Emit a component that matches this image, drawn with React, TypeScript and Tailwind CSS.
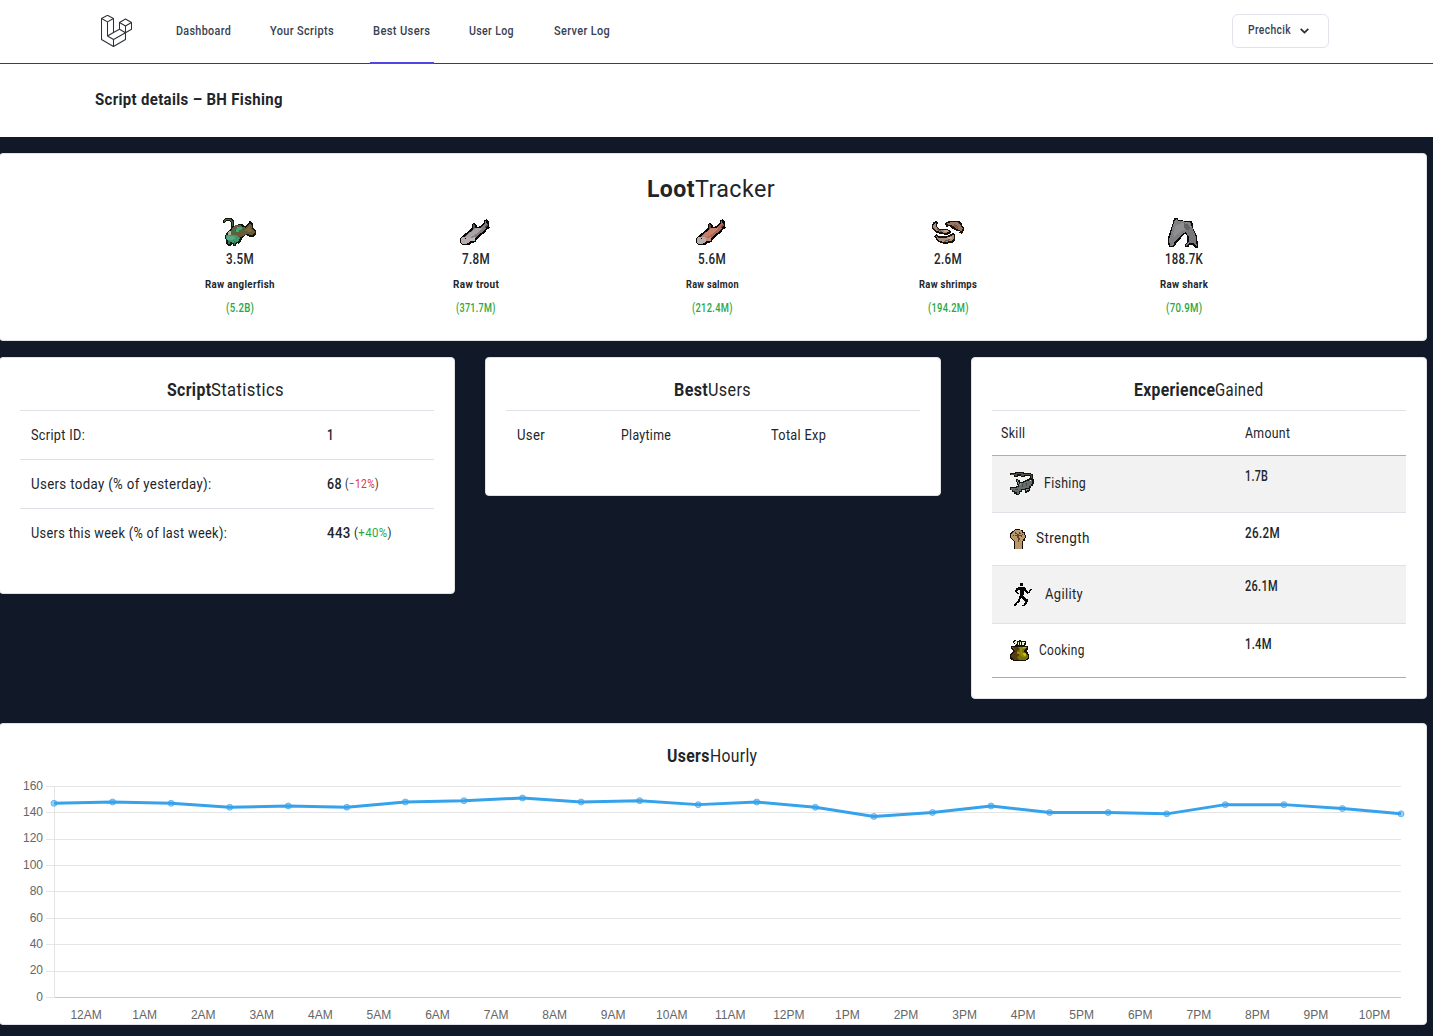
import { useLayoutEffect, useRef, useState } from "react";
import type { ReactNode } from "react";

/* Condensed text: the glyphs are scaled horizontally to fill a given width. */
function Fit({ w, className = "", children }: { w: number; className?: string; children: ReactNode }) {
  const ref = useRef<HTMLSpanElement>(null);
  const [scale, setScale] = useState(1);
  useLayoutEffect(() => {
    if (ref.current) setScale(w / ref.current.offsetWidth);
  }, [w]);
  return (
    <span className={"inline-block shrink-0 whitespace-nowrap " + className} style={{ width: w }}>
      <span ref={ref} className="inline-block origin-left tracking-[0.4px]" style={{ transform: `scaleX(${scale})` }}>
        {children}
      </span>
    </span>
  );
}

function Logo() {
  return (
    <svg width="32" height="33" viewBox="0.5 0.5 32 33" fill="none" stroke="#2d3038" strokeWidth="1.05" strokeLinejoin="round">
      <path d="M1 4 L7 .8 L13 4 L13 18 L19 14.7 L19 8 L25 4.5 L31 8 L31 14.7 L25 18.2 L25 25 L13 32 L1 25 Z" />
      <path d="M1 4 L7 7.4 L13 4 M7 7.4 V21.5 L13 25 V32 M7 21.5 L13 18 M13 25 L25 18.2 M19 8 L25 11.5 L31 8 M25 11.5 V18.2 L19 14.7" />
    </svg>
  );
}

function Anglerfish() {
  return (
    <svg width="35" height="32" viewBox="96 21 105 96" shapeRendering="crispEdges">
      <path d="M99 42V33L105 27H123L132 36V54L147 45H156L165 51L177 39L180 34L189 45L190 57L198 66V75L189 84H180L168 78L159 84L153 96L147 105L141 102L138 111H129V105L120 111H114L108 102V93L105 84L108 72L114 66L123 57V42L117 36H108L105 42Z" fill="#15150c" />
      <path d="M102 39V33L108 30H120L129 39V52H126V39L117 33H108Z" fill="#3a674b" />
      <path d="M126 60L135 48H150L159 54L168 57L180 42L186 51V60L195 69L186 80L171 75L159 81L144 90L132 81L120 75Z" fill="#665d36" />
      <path d="M123 63L135 54H150V63L138 69L126 75Z" fill="#4a6b48" />
      <path d="M141 54H156V60L147 63V69H138Z" fill="#35aa7e" />
      <path d="M108 78L123 78L138 78L150 87L144 99L129 102L114 96L108 87Z" fill="#3f9672" />
      <path d="M111 81L129 81L138 87L126 93H111Z" fill="#57ab87" />
      <path d="M117 66H123V78H114V69Z" fill="#b1b6a1" />
      <path d="M147 48H153V54H147ZM153 60H159V66H153ZM114 96H120V105H114ZM132 96H135V108H132Z" fill="#2b7952" />
      <path d="M168 60L180 48V60L189 66L180 69L165 66Z" fill="#7a6d3d" />
    </svg>
  );
}

function Fish({ tint }: { tint: "gray" | "red" }) {
  const c = tint === "gray" ? ["#817b7e", "#a8a3a6", "#bbb8ba", "#565153"] : ["#ab6858", "#c4816c", "#c88977", "#754239"];
  return (
    <svg width="32" height="29" viewBox="87 24 96 87" shapeRendering="crispEdges">
      <path d="M90 99V87L96 78L108 69L120 60L126 51V42L132 39L141 48V51L150 48L162 39V30L171 27L174 33H177V51L180 54L171 57L168 63L159 72L147 81L138 90V96L123 99L117 105H96Z" fill="#080707" />
      <path d="M99 84L111 72L126 63L132 54L150 54L165 42V33H168L171 42L168 54L153 69L135 84L120 93L108 90Z" fill={c[0]} />
      <path d="M105 81L123 66L138 54L153 54L156 57L138 72L120 84Z" fill={c[1]} />
      <path d="M96 81H114L120 84V96L108 102H96L93 96V87Z" fill="#b7adae" />
      <path d="M120 84L135 81V93H120Z" fill={c[2]} />
      <path d="M129 42L135 48V54L129 57ZM165 48L174 39V48L165 54Z" fill={c[3]} />
      <path d="M105 84H108V87H105Z" fill="#080707" />
    </svg>
  );
}

function Shrimps() {
  return (
    <svg width="33" height="26" viewBox="90 33 99 78" shapeRendering="crispEdges">
      <g fill="#17110d">
        <path d="M93 48L96 45V42L108 39L111 45L108 48V57L117 63H138L150 69V75L138 81L117 78L102 72L93 60Z" />
        <path d="M132 45L144 39H162L174 39L183 48V54L189 57V66L183 78L174 75L177 69L168 69L156 63L144 54L135 57Z" />
        <path d="M99 84L105 78L114 84L135 84L144 81L156 75L162 81V96L153 105L129 108L111 102Z" />
      </g>
      <path d="M96 51L105 42V57L114 66L141 69L144 72L132 75L117 72L102 66L96 57Z" fill="#a58c79" />
      <path d="M135 48L150 42H168L180 51V57L186 60L180 72L177 66L165 63L159 54L144 51Z" fill="#96745f" />
      <path d="M105 84L114 90H135L150 84L156 78L159 84V93L150 99L129 102L114 99Z" fill="#a8917d" />
      <path d="M108 60L123 69V72L111 69ZM159 48L171 54V63L162 57ZM123 99L138 96L147 90V96L132 102Z" fill="#75594a" />
      <path d="M129 66H141V72H129ZM141 87H153V93H141Z" fill="#c3ab94" />
    </svg>
  );
}

function Shark() {
  return (
    <svg width="32" height="31" viewBox="801 21 96 93" shapeRendering="crispEdges">
      <path d="M819 36L822 24H834V30L864 33L876 33L879 42V51L882 60L891 78V90L894 96V114H885L876 105H867V112H855V102L861 96V78L855 72L849 75L843 84L837 90L828 102L822 112H810L804 102V84L810 66Z" fill="#0d0d0d" />
      <path d="M822 36L828 27L834 33L870 36L876 51L873 60L858 66L846 72L837 84L825 93L819 108H810L807 90L813 69Z" fill="#807f82" />
      <path d="M867 54L876 51L888 81V93L891 108L879 99L867 99L858 108V102L867 93V81L858 66Z" fill="#77767a" />
      <path d="M828 45L849 39L864 45V57L846 60L834 72L822 81L819 69Z" fill="#8f8d90" />
      <path d="M852 39L867 45L870 57L861 60L852 54Z" fill="#636266" />
    </svg>
  );
}

function FishingIcon() {
  return (
    <svg width="25" height="24" viewBox="120 369 75 72" shapeRendering="crispEdges">
      <path d="M120 372H135V369H162V372H183V375H189V390H180V381H165V384H153V381H144V384H132V378H120Z" fill="#151310" />
      <path d="M123 375H138V372H159V375H183V387H186V378H162V381H153V375H141V381H135V378H123Z" fill="#5a5042" />
      <path d="M138 390H144V393H150V399H159V396H165V393H171V390H177V387H189V390H192V405H189V411H183V417H180V426H177V429H171V432H165V423H156V429H150V435H147V438H138V435H132V429H126V423H120V414H138V411H144V408H141V399H138Z" fill="#111514" />
      <path d="M168 396H177V393H186V405H183V411H177V417H165V420H153V426H147V435H141V429H135V426H129V423H123V417H141V414H147V408H153V402H162V399H168Z" fill="#666d6c" />
      <path d="M141 393H144V399H147V405H144V399H141ZM150 402H153V408H147V405H150ZM171 420H177V423H171V426H168V420Z" fill="#8a9292" />
      <path d="M180 393H183V396H180Z" fill="#e4ecec" />
      <path d="M156 405H159V414H156ZM168 402H171V411H168ZM135 420H144V423H135Z" fill="#424846" />
    </svg>
  );
}

function StrengthIcon() {
  return (
    <svg width="16" height="20" viewBox="60 57 48 60" shapeRendering="crispEdges">
      <path d="M75 57H90V60H99V66H105V75H108V84H105V93H99V117H72V93L66 90L60 81V69L66 66V63L75 60Z" fill="#130e09" />
      <path d="M75 60H87L96 63V69L102 69V75H105V84H102L99 93H96V117H75V93H72V90L66 87L63 81V72L69 66Z" fill="#b9986b" />
      <path d="M75 66H78V69H81V72H87V66H90V69H93V72H87V75H93V78H87V84H90V90H87V96H84V84H81V78H75V75H81V72H75ZM96 72H99V75H96V81H93V75H96ZM69 75H72V78H69Z" fill="#5d452c" />
    </svg>
  );
}

function AgilityIcon() {
  return (
    <svg width="18" height="23" viewBox="72 219 54 69" shapeRendering="crispEdges">
      <path d="M90 219H99V228H90ZM84 231H105V234H108V240H111V243H114V246H117V240H120V237H126V240H123V243H120V249H114V252H111V249H108V246H105V243H102V255H99V258H102V261H105V264H108V267H114V276H111V282H108V285H105V288H96V285H102V279H105V273H102V270H99V267H96V264H93V267H90V276H87V279H81V285H78V288H72V282H75V279H78V276H81V273H84V267H87V258H90V240H84V243H81V246H84V249H87V252H81V249H78V246H75V240H78V234H84Z" fill="#050505" />
    </svg>
  );
}

function CookingIcon() {
  return (
    <svg width="19" height="21" viewBox="60 390 57 63" shapeRendering="crispEdges">
      <path d="M72 390H78V393H87V390H93V393H108V402L105 408H114V417L108 423L114 429L117 435V444L111 450L102 453H72L63 450L60 441V432L69 426V420L63 417V408H75V402H72V399H69V393H72Z" fill="#191407" />
      <path d="M75 393H81V402H78V405H75V399H72V396H75ZM84 396H87V405H84ZM90 396H93V405H90ZM96 396H105V399H102V405H96Z" fill="#e9f7d9" />
      <path d="M66 411H111V414L102 420V426L114 435V441L105 450H75L63 441V435L75 426V420L66 414Z" fill="#78700b" />
      <path d="M66 411H81L87 417L81 426L87 435L81 441L87 450H75L63 441V435L75 426V420Z" fill="#573c12" />
      <path d="M87 411H108V414L99 417L96 426L105 432L108 435V441H96L90 432H81V426H90V417Z" fill="#928a09" />
      <path d="M99 411H108V414H99ZM99 429H108V438H102Z" fill="#c2bb10" />
    </svg>
  );
}

const nav = [
  { label: "Dashboard", w: 55, gap: "ml-[43px]" },
  { label: "Your Scripts", w: 64, gap: "ml-[39px]" },
  { label: "Best Users", w: 57, gap: "ml-[39px]", active: true },
  { label: "User Log", w: 45, gap: "ml-[39px]" },
  { label: "Server Log", w: 56, gap: "ml-[40px]" },
];

const loot = [
  { icon: <Anglerfish />, amount: "3.5M", aw: 28, name: "Raw anglerfish", nw: 70, value: "(5.2B)", vw: 28 },
  { icon: <Fish tint="gray" />, amount: "7.8M", aw: 28, name: "Raw trout", nw: 46, value: "(371.7M)", vw: 40 },
  { icon: <Fish tint="red" />, amount: "5.6M", aw: 28, name: "Raw salmon", nw: 53, value: "(212.4M)", vw: 41 },
  { icon: <Shrimps />, amount: "2.6M", aw: 28, name: "Raw shrimps", nw: 58, value: "(194.2M)", vw: 41 },
  { icon: <Shark />, amount: "188.7K", aw: 38, name: "Raw shark", nw: 48, value: "(70.9M)", vw: 36 },
];

const skills = [
  { icon: <FishingIcon />, name: "Fishing", w: 42, amount: "1.7B", aw: 23, row: "h-[57px] bg-[#f2f2f2]", pad: "pl-[18px]", gap: "ml-[9px]" },
  { icon: <StrengthIcon />, name: "Strength", w: 54, amount: "26.2M", aw: 35, row: "h-[53px]", pad: "pl-[18px]", gap: "ml-[10px]" },
  { icon: <AgilityIcon />, name: "Agility", w: 38, amount: "26.1M", aw: 33, row: "h-[58px] bg-[#f2f2f2]", pad: "pl-[22px]", gap: "ml-[13px]" },
  { icon: <CookingIcon />, name: "Cooking", w: 46, amount: "1.4M", aw: 27, row: "h-[53px]", pad: "pl-[18px]", gap: "ml-[10px]" },
];

const hourly = [147, 148, 147, 144, 145, 144, 148, 149, 151, 148, 149, 146, 148, 144, 137, 140, 145, 140, 140, 139, 146, 146, 143, 139];
const hours = ["12AM", "1AM", "2AM", "3AM", "4AM", "5AM", "6AM", "7AM", "8AM", "9AM", "10AM", "11AM", "12PM", "1PM", "2PM", "3PM", "4PM", "5PM", "6PM", "7PM", "8PM", "9PM", "10PM"];
const gridY = [786, 812, 839, 865, 891, 918, 944, 971, 997];

function Title({ bold, rest, bw, rw, className = "" }: { bold: string; rest: string; bw: number; rw: number; className?: string }) {
  return (
    <h2 className={"flex justify-center " + className}>
      <Fit w={bw} className="font-bold">{bold}</Fit>
      <Fit w={rw}>{rest}</Fit>
    </h2>
  );
}

const card = "rounded-[4px] border border-[#dfe1e4] bg-white";

function Chart() {
  const x = (i: number) => 54 + i * 58.565;
  const y = (v: number) => 997.2 - v * 1.319;
  return (
    <svg width="1426" height="254" viewBox="0 770 1426 254" className="block">
      <g shapeRendering="crispEdges">
        {gridY.map((gy, i) => (
          <g key={gy}>
            <rect x="46" y={gy} width="8" height="1" fill="#e5e5e5" />
            <rect x="54" y={gy} width="1347" height="1" fill={i === 8 ? "#c9c9c9" : "#e5e5e5"} />
          </g>
        ))}
        <rect x="54" y="786" width="1" height="212" fill="#e5e5e5" />
      </g>
      <g fill="#666" fontSize="12" fontFamily="Liberation Sans, Arial, sans-serif">
        {gridY.map((gy, i) => (
          <text key={gy} x="43" y={gy + (i === 2 || i === 7 ? 3 : 4)} textAnchor="end">{160 - i * 20}</text>
        ))}
        {hours.map((h, i) => (
          <text key={h} x={86.1 + i * 58.565} y="1019" textAnchor="middle">{h}</text>
        ))}
      </g>
      <polyline points={hourly.map((v, i) => `${x(i)},${y(v)}`).join(" ")} fill="none" stroke="#36a2eb" strokeWidth="3" strokeLinejoin="round" />
      {hourly.map((v, i) => (
        <circle key={i} cx={x(i)} cy={y(v)} r="3" fill="#36a2eb" fillOpacity="0.5" stroke="#36a2eb" strokeOpacity="0.65" />
      ))}
    </svg>
  );
}

export default function App() {
  return (
    <div className="h-[1036px] w-[1433px] overflow-hidden bg-[#111827] font-[Roboto,sans-serif] text-[15px] leading-[20px] text-[#212529]">
      <nav className="flex h-[64px] border-b border-[#374151] bg-white text-[12.5px] font-medium text-[#374151]">
        <div className="mt-[15px] ml-[101px] w-[32px]"><Logo /></div>
        {nav.map((n) => (
          <div key={n.label} className={"relative h-[64px] pt-[21px] " + n.gap}>
            <Fit w={n.w}>{n.label}</Fit>
            {n.active && <div className="absolute bottom-0 -left-[3px] h-[2px] w-[64px] bg-[#4f46e5]" />}
          </div>
        ))}
        <button className="mt-[14px] mr-[104px] ml-auto flex h-[34px] w-[97px] items-center rounded-[6px] border border-[#e2e3ea] pb-[2px] pl-[15px]">
          <Fit w={43}>Prechcik</Fit>
          <svg className="mt-[2px] ml-[9px]" width="9" height="6" viewBox="0 0 9 6" fill="none" stroke="#272d37" strokeWidth="1.7">
            <path d="M.7 .8 4.5 4.6 8.3 .8" />
          </svg>
        </button>
      </nav>
      <header className="h-[73px] bg-white pt-[25px] pl-[95px] text-[17px] font-bold">
        <Fit w={188}>Script details – BH Fishing</Fit>
      </header>

      <main className="-ml-px w-[1428px]">
        <section className={card + " mt-[16px] h-[188px] pt-[25px]"}>
          <Title bold="Loot" rest="Tracker" bw={48} rw={80} className="mr-[4px] text-[24.5px]" />
          <div className="mt-[16px] ml-[122px] flex">
            {loot.map((l) => (
              <div key={l.name} className="flex w-[236px] flex-col items-center">
                <div className="mr-[2px] flex h-[34px] items-center">{l.icon}</div>
                <Fit w={l.aw} className="font-medium">{l.amount}</Fit>
                <Fit w={l.nw} className="mt-[5px] text-[11.5px] font-bold">{l.name}</Fit>
                <Fit w={l.vw} className="mt-[4px] text-[12px] font-medium text-[#28a745]">{l.value}</Fit>
              </div>
            ))}
          </div>
        </section>

        <div className="mt-[16px] flex h-[366px] items-start gap-[30px]">
          <section className={card + " h-[237px] w-[456px] px-[20px] pt-[22px]"}>
            <Title bold="Script" rest="Statistics" bw={44} rw={73} className="mr-[3px] text-[18px]" />
            <div className="mt-[10px]">
              <div className="flex h-[49px] border-t border-[#dee2e6] pt-[14px] pl-[11px]">
                <div className="w-[296px]"><Fit w={54}>Script ID:</Fit></div>
                <Fit w={7} className="font-medium">1</Fit>
              </div>
              <div className="flex h-[49px] border-t border-[#dee2e6] pt-[14px] pl-[11px]">
                <div className="w-[296px]"><Fit w={181}>Users today (% of yesterday):</Fit></div>
                <Fit w={15} className="font-medium">68</Fit>
                <Fit w={34} className="ml-[3px] text-[12px]">(<span className="text-[#dc3545]">−12%</span>)</Fit>
              </div>
              <div className="flex h-[49px] border-t border-[#dee2e6] pt-[14px] pl-[11px]">
                <div className="w-[296px]"><Fit w={196}>Users this week (% of last week):</Fit></div>
                <Fit w={24} className="font-medium">443</Fit>
                <Fit w={38} className="ml-[3px] text-[12px]">(<span className="text-[#28a745]">+40%</span>)</Fit>
              </div>
            </div>
          </section>

          <section className={card + " h-[139px] w-[456px] px-[20px] pt-[22px]"}>
            <Title bold="Best" rest="Users" bw={34} rw={43} className="mr-[2px] text-[18px]" />
            <div className="mt-[10px] flex border-t border-[#dee2e6] pt-[14px] pl-[11px]">
              <div className="w-[104px]"><Fit w={28}>User</Fit></div>
              <div className="w-[150px]"><Fit w={50}>Playtime</Fit></div>
              <Fit w={55}>Total Exp</Fit>
            </div>
          </section>

          <section className={card + " h-[342px] w-[456px] px-[20px] pt-[22px]"}>
            <Title bold="Experience" rest="Gained" bw={81} rw={48} className="mr-[2px] text-[18px]" />
            <div className="mt-[10px] flex h-[46px] border-y border-t-[#dee2e6] border-b-[#adadad] pt-[12px] pl-[9px]">
              <div className="w-[244px]"><Fit w={24}>Skill</Fit></div>
              <Fit w={45}>Amount</Fit>
            </div>
            <div className="border-b border-[#adadad]">
              {skills.map((s, i) => (
                <div key={s.name} className={"flex " + s.row + (i < 3 ? " border-b border-[#dee2e6]" : "")}>
                  <div className={"flex w-[253px] items-center " + s.pad}>
                    {s.icon}
                    <Fit w={s.w} className={"pb-[2px] " + s.gap}>{s.name}</Fit>
                  </div>
                  <Fit w={s.aw} className="pt-[10px] font-medium">{s.amount}</Fit>
                </div>
              ))}
            </div>
          </section>
        </div>

        <section className={card + " h-[302px] overflow-hidden pt-[22px]"}>
          <Title bold="Users" rest="Hourly" bw={43} rw={47} className="mr-[3px] text-[18px]" />
          <div className="mt-[4px]"><Chart /></div>
        </section>
      </main>
    </div>
  );
}
